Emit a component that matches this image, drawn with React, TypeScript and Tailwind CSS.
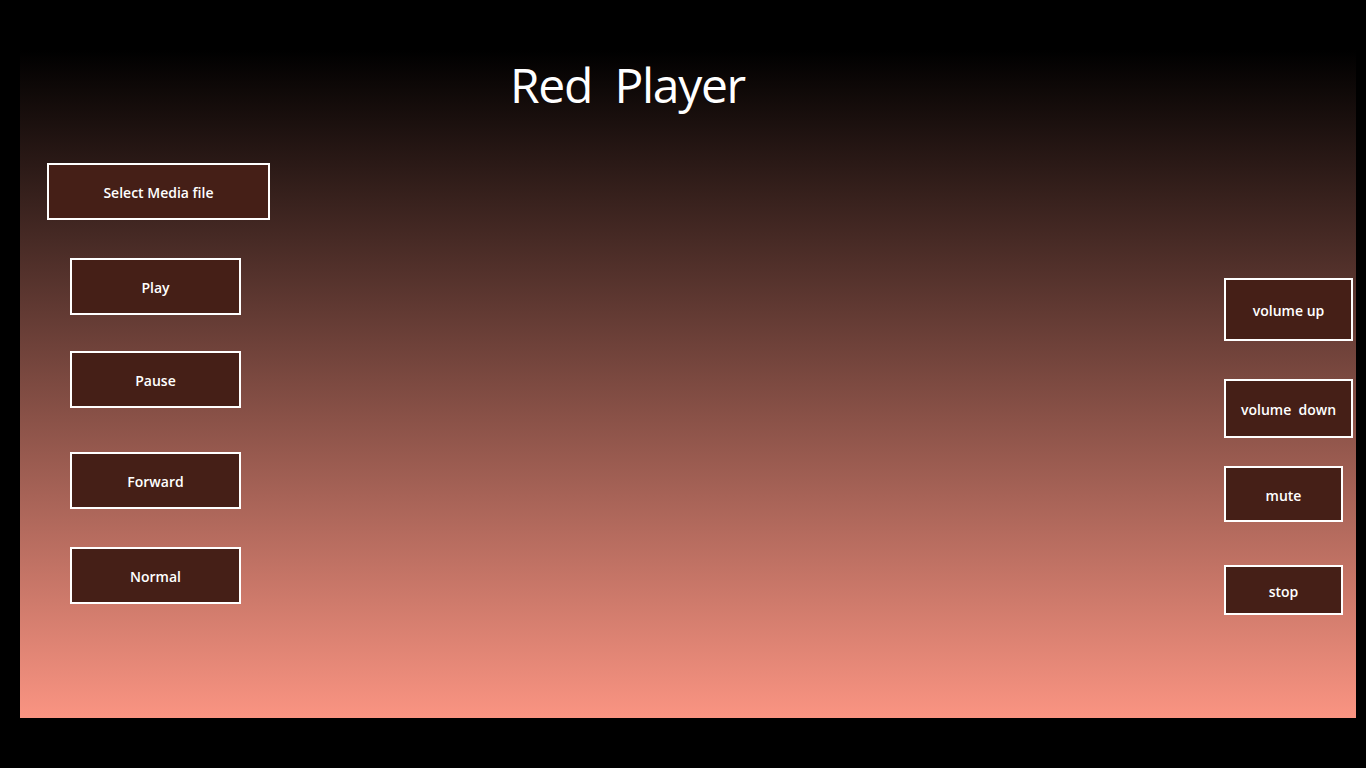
import React from "react";

const btn =
  "box-border border-2 border-white bg-[#451f17] text-white font-semibold text-[14px] pt-[2px] flex items-center justify-center";

export default function App() {
  return (
    <div
      className="w-[1366px] h-[768px] bg-black overflow-hidden pt-[50px] pl-[20px]"
      style={{ fontFamily: '"Open Sans", "Noto Sans", sans-serif' }}
    >
      <div className="w-[1336px] h-[668px] bg-[linear-gradient(to_bottom,#000000,#fa9482)] flex flex-col">
        <div className="pl-[490px] mt-[2px] h-[65px] text-white text-[48px] leading-[65px] font-normal tracking-[-1.3px] whitespace-pre">
          {"Red  Player"}
        </div>
        <div className="flex flex-row justify-between items-start">
          <div className="flex flex-col items-start mt-[46px] ml-[27px]">
            <div className={`${btn} w-[223px] h-[57px]`}>Select Media file</div>
            <div className={`${btn} w-[171px] h-[57px] ml-[23px] mt-[38px]`}>Play</div>
            <div className={`${btn} w-[171px] h-[57px] ml-[23px] mt-[36px]`}>Pause</div>
            <div className={`${btn} w-[171px] h-[57px] ml-[23px] mt-[44px]`}>Forward</div>
            <div className={`${btn} w-[171px] h-[57px] ml-[23px] mt-[38px]`}>Normal</div>
          </div>
          <div className="flex flex-col items-start mt-[161px] mr-[3px]">
            <div className={`${btn} w-[129px] h-[63px]`}>volume up</div>
            <div className={`${btn} w-[129px] h-[59px] mt-[38px] whitespace-pre`}>{"volume  down"}</div>
            <div className={`${btn} w-[119px] h-[56px] mt-[28px]`}>mute</div>
            <div className={`${btn} w-[119px] h-[50px] mt-[43px]`}>stop</div>
          </div>
        </div>
      </div>
    </div>
  );
}
